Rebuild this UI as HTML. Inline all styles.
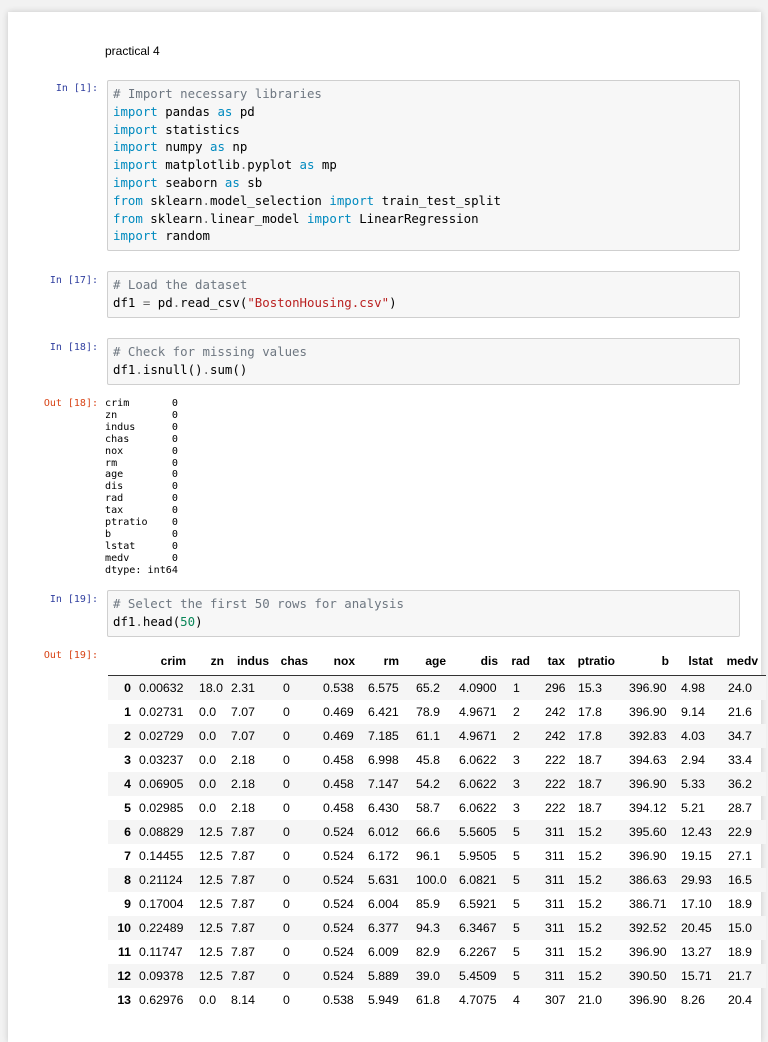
<!DOCTYPE html>
<html><head><meta charset="utf-8"><style>
body{margin:0;background:#f2f2f2;width:768px;height:1024px;overflow:hidden;position:relative;font-family:"Liberation Sans",sans-serif}
.card{position:absolute;left:8px;top:12px;width:753px;height:1030px;background:#fff;box-shadow:0 0 6px rgba(0,0,0,.18)}
.abs{position:absolute}
.lbl{position:absolute;font-family:"DejaVu Sans Mono",monospace;font-size:10px;color:#303f9f;text-align:right;width:92px;left:6px}
.out{color:#d84315}
.code{position:absolute;left:107px;width:633px;background:#f7f7f7;border:1px solid #cfcfcf;border-radius:2px;font-family:"DejaVu Sans Mono",monospace;font-size:12.4px;line-height:17.8px;padding:4px 0 0 5px;box-sizing:border-box;color:#000;white-space:pre}
.k{color:#008abf}.c{color:#6e7781}.s{color:#ba2121}.n{color:#098658}.o{color:#666}
.o18{position:absolute;left:105px;top:398px;font-family:"DejaVu Sans Mono",monospace;font-size:10.1px;line-height:11.9px;white-space:pre;color:#000}
.hdr span{position:absolute;top:654px;font-size:12px;font-weight:bold;color:#000}
table{position:absolute;left:108px;top:675px;width:658px;border-collapse:collapse;table-layout:fixed;font-size:12.3px;border-top:1px solid #333}
td{height:24px;padding:0;white-space:nowrap;color:#000;overflow:hidden}
td:first-child{text-align:right;font-weight:bold;padding-right:8px}
tr:nth-child(odd){background:#f5f5f5}
</style></head><body>
<div class="card"></div>
<div class="abs" style="left:105px;top:44px;font-size:12px">practical 4</div>

<div class="lbl" style="top:83px">In [1]:</div>
<div class="code" style="top:80px;height:171px"><span class="c"># Import necessary libraries</span>
<span class="k">import</span> pandas <span class="k">as</span> pd
<span class="k">import</span> statistics
<span class="k">import</span> numpy <span class="k">as</span> np
<span class="k">import</span> matplotlib<span class="o">.</span>pyplot <span class="k">as</span> mp
<span class="k">import</span> seaborn <span class="k">as</span> sb
<span class="k">from</span> sklearn<span class="o">.</span>model_selection <span class="k">import</span> train_test_split
<span class="k">from</span> sklearn<span class="o">.</span>linear_model <span class="k">import</span> LinearRegression
<span class="k">import</span> random</div>

<div class="lbl" style="top:275px">In [17]:</div>
<div class="code" style="top:271px;height:47px"><span class="c"># Load the dataset</span>
df1 <span class="o">=</span> pd<span class="o">.</span>read_csv(<span class="s">"BostonHousing.csv"</span>)</div>

<div class="lbl" style="top:342px">In [18]:</div>
<div class="code" style="top:338px;height:47px"><span class="c"># Check for missing values</span>
df1<span class="o">.</span>isnull()<span class="o">.</span>sum()</div>

<div class="lbl out" style="top:398px">Out [18]:</div>
<div class="o18">crim       0
zn         0
indus      0
chas       0
nox        0
rm         0
age        0
dis        0
rad        0
tax        0
ptratio    0
b          0
lstat      0
medv       0
dtype: int64</div>

<div class="lbl" style="top:594px">In [19]:</div>
<div class="code" style="top:590px;height:47px"><span class="c"># Select the first 50 rows for analysis</span>
df1<span class="o">.</span>head(<span class="n">50</span>)</div>

<div class="lbl out" style="top:650px">Out [19]:</div>
<div class="hdr">
<span style="right:582px">crim</span><span style="right:544px">zn</span><span style="right:499px">indus</span><span style="right:460px">chas</span><span style="right:413px">nox</span><span style="right:369px">rm</span><span style="right:322px">age</span><span style="right:270px">dis</span><span style="right:238px">rad</span><span style="right:203px">tax</span><span style="right:153px">ptratio</span><span style="right:99px">b</span><span style="right:55px">lstat</span><span style="right:10px">medv</span>
</div>
<table>
<colgroup><col style="width:31px"><col style="width:60px"><col style="width:32px"><col style="width:52px"><col style="width:40px"><col style="width:45px"><col style="width:48px"><col style="width:43px"><col style="width:54px"><col style="width:32px"><col style="width:33px"><col style="width:51px"><col style="width:52px"><col style="width:47px"><col style="width:38px"></colgroup>
<tr><td>0</td><td>0.00632</td><td>18.0</td><td>2.31</td><td>0</td><td>0.538</td><td>6.575</td><td>65.2</td><td>4.0900</td><td>1</td><td>296</td><td>15.3</td><td>396.90</td><td>4.98</td><td>24.0</td></tr>
<tr><td>1</td><td>0.02731</td><td>0.0</td><td>7.07</td><td>0</td><td>0.469</td><td>6.421</td><td>78.9</td><td>4.9671</td><td>2</td><td>242</td><td>17.8</td><td>396.90</td><td>9.14</td><td>21.6</td></tr>
<tr><td>2</td><td>0.02729</td><td>0.0</td><td>7.07</td><td>0</td><td>0.469</td><td>7.185</td><td>61.1</td><td>4.9671</td><td>2</td><td>242</td><td>17.8</td><td>392.83</td><td>4.03</td><td>34.7</td></tr>
<tr><td>3</td><td>0.03237</td><td>0.0</td><td>2.18</td><td>0</td><td>0.458</td><td>6.998</td><td>45.8</td><td>6.0622</td><td>3</td><td>222</td><td>18.7</td><td>394.63</td><td>2.94</td><td>33.4</td></tr>
<tr><td>4</td><td>0.06905</td><td>0.0</td><td>2.18</td><td>0</td><td>0.458</td><td>7.147</td><td>54.2</td><td>6.0622</td><td>3</td><td>222</td><td>18.7</td><td>396.90</td><td>5.33</td><td>36.2</td></tr>
<tr><td>5</td><td>0.02985</td><td>0.0</td><td>2.18</td><td>0</td><td>0.458</td><td>6.430</td><td>58.7</td><td>6.0622</td><td>3</td><td>222</td><td>18.7</td><td>394.12</td><td>5.21</td><td>28.7</td></tr>
<tr><td>6</td><td>0.08829</td><td>12.5</td><td>7.87</td><td>0</td><td>0.524</td><td>6.012</td><td>66.6</td><td>5.5605</td><td>5</td><td>311</td><td>15.2</td><td>395.60</td><td>12.43</td><td>22.9</td></tr>
<tr><td>7</td><td>0.14455</td><td>12.5</td><td>7.87</td><td>0</td><td>0.524</td><td>6.172</td><td>96.1</td><td>5.9505</td><td>5</td><td>311</td><td>15.2</td><td>396.90</td><td>19.15</td><td>27.1</td></tr>
<tr><td>8</td><td>0.21124</td><td>12.5</td><td>7.87</td><td>0</td><td>0.524</td><td>5.631</td><td>100.0</td><td>6.0821</td><td>5</td><td>311</td><td>15.2</td><td>386.63</td><td>29.93</td><td>16.5</td></tr>
<tr><td>9</td><td>0.17004</td><td>12.5</td><td>7.87</td><td>0</td><td>0.524</td><td>6.004</td><td>85.9</td><td>6.5921</td><td>5</td><td>311</td><td>15.2</td><td>386.71</td><td>17.10</td><td>18.9</td></tr>
<tr><td>10</td><td>0.22489</td><td>12.5</td><td>7.87</td><td>0</td><td>0.524</td><td>6.377</td><td>94.3</td><td>6.3467</td><td>5</td><td>311</td><td>15.2</td><td>392.52</td><td>20.45</td><td>15.0</td></tr>
<tr><td>11</td><td>0.11747</td><td>12.5</td><td>7.87</td><td>0</td><td>0.524</td><td>6.009</td><td>82.9</td><td>6.2267</td><td>5</td><td>311</td><td>15.2</td><td>396.90</td><td>13.27</td><td>18.9</td></tr>
<tr><td>12</td><td>0.09378</td><td>12.5</td><td>7.87</td><td>0</td><td>0.524</td><td>5.889</td><td>39.0</td><td>5.4509</td><td>5</td><td>311</td><td>15.2</td><td>390.50</td><td>15.71</td><td>21.7</td></tr>
<tr><td>13</td><td>0.62976</td><td>0.0</td><td>8.14</td><td>0</td><td>0.538</td><td>5.949</td><td>61.8</td><td>4.7075</td><td>4</td><td>307</td><td>21.0</td><td>396.90</td><td>8.26</td><td>20.4</td></tr>
</table>
</body></html>
